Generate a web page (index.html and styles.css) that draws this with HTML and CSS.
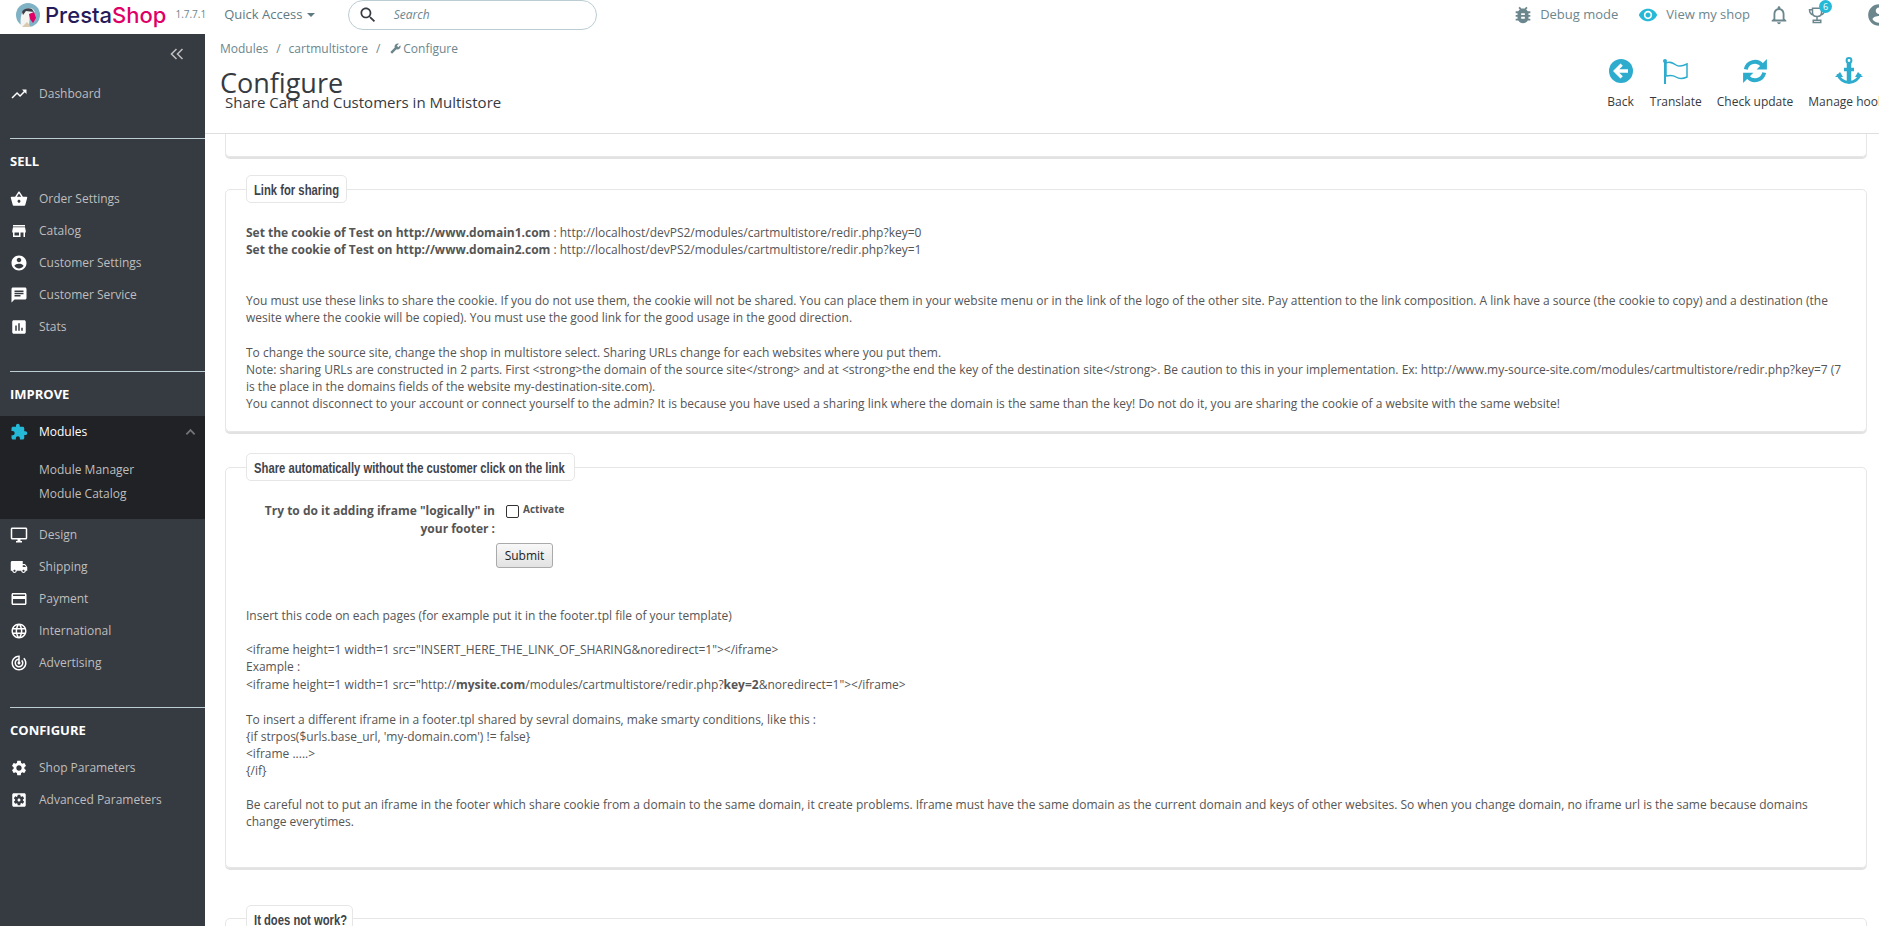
FILE: index.html
```html
<!DOCTYPE html>
<html lang="en">
<head>
    <meta charset="UTF-8">
    <title>Configure - PrestaShop</title>
    <link rel="stylesheet" href="styles.css">
</head>
<body>
    <!-- Top bar -->
    <div class="topbar">
        <svg class="logo-mark" viewBox="0 0 24 24" width="24" height="24">
            <circle cx="12" cy="12" r="12" fill="#7fb2c4"/>
            <path d="M5 23c-1-6 0-12 2-15 2-3 7-4 10-2l2 3-5 2-1 12z" fill="#f4f4f2"/>
            <path d="M6 9c1-3 6-5 10-3l2 3-8-1-3 4z" fill="#3a3f4a"/>
            <path d="M13 11l5-2 2 6-3 5-3-4z" fill="#df0067"/>
            <path d="M6 24l5-5 4 5z" fill="#d8c9b0"/>
        </svg>
        <span class="logo-text"><span class="logo-presta">Presta</span><span class="logo-shop">Shop</span></span>
        <span class="version">1.7.7.1</span>
        <a class="quick-access" href="#">Quick Access <span class="caret"></span></a>
        <div class="search-box">
            <svg viewBox="0 0 24 24" width="20" height="20"><path fill="#363a41" d="M15.5 14h-.79l-.28-.27C15.41 12.59 16 11.11 16 9.5 16 5.91 13.09 3 9.5 3S3 5.91 3 9.5 5.91 16 9.5 16c1.61 0 3.09-.59 4.23-1.57l.27.28v.79l5 4.99L20.49 19l-4.99-5zm-6 0C7.01 14 5 11.99 5 9.5S7.01 5 9.5 5 14 7.01 14 9.5 11.99 14 9.5 14z"/></svg>
            <span class="search-text">Search</span>
        </div>
        <div class="top-right">
            <svg class="top-icon" viewBox="0 0 24 24" width="22" height="22"><path fill="#6c868e" d="M20 8h-2.81c-.45-.78-1.07-1.45-1.82-1.96L17 4.41 15.59 3l-2.17 2.17C12.96 5.06 12.49 5 12 5c-.49 0-.96.06-1.41.17L8.41 3 7 4.41l1.62 1.63C7.88 6.55 7.26 7.22 6.81 8H4v2h2.09c-.05.33-.09.66-.09 1v1H4v2h2v1c0 .34.04.67.09 1H4v2h2.81c1.04 1.79 2.97 3 5.19 3s4.15-1.21 5.19-3H20v-2h-2.09c.05-.33.09-.66.09-1v-1h2v-2h-2v-1c0-.34-.04-.67-.09-1H20V8zm-6 8h-4v-2h4v2zm0-4h-4v-2h4v2z"/></svg>
            <span class="top-link debug-link">Debug mode</span>
            <svg class="top-icon" viewBox="0 0 24 24" width="20" height="20"><path fill="#25b9d7" d="M12 4.5C7 4.5 2.73 7.61 1 12c1.73 4.39 6 7.5 11 7.5s9.27-3.11 11-7.5c-1.73-4.39-6-7.5-11-7.5zM12 17c-2.76 0-5-2.24-5-5s2.24-5 5-5 5 2.24 5 5-2.24 5-5 5zm0-8c-1.66 0-3 1.34-3 3s1.34 3 3 3 3-1.34 3-3-1.34-3-3-3z"/></svg>
            <span class="top-link shop-link">View my shop</span>
            <svg class="bell" viewBox="0 0 24 24" width="22" height="22"><path fill="#6c868e" d="M12 22c1.1 0 2-.9 2-2h-4c0 1.1.9 2 2 2zm6-6v-5c0-3.07-1.63-5.64-4.5-6.32V4c0-.83-.67-1.5-1.5-1.5s-1.5.67-1.5 1.5v.68C7.64 5.36 6 7.92 6 11v5l-2 2v1h16v-1l-2-2zm-2 1H8v-6c0-2.48 1.51-4.5 4-4.5s4 2.02 4 4.5v6z"/></svg>
            <div class="trophy">
                <svg viewBox="0 0 24 24" width="18" height="20"><path fill="none" stroke="#6c868e" stroke-width="2" d="M6 3h12v6c0 3-2.5 5-6 5s-6-2-6-5zM6 5H2c0 4 1.5 6 5 7M18 5h4c0 4-1.5 6-5 7M12 14v4M7 22v-3h10v3z"/></svg>
                <span class="badge">6</span>
            </div>
            <svg class="avatar" viewBox="0 0 24 24" width="26" height="26"><path fill="#6c868e" d="M12 2C6.48 2 2 6.48 2 12s4.48 10 10 10 10-4.48 10-10S17.52 2 12 2zm0 3c1.66 0 3 1.34 3 3s-1.34 3-3 3-3-1.34-3-3 1.34-3 3-3zm0 14.2c-2.5 0-4.71-1.28-6-3.22.03-1.99 4-3.08 6-3.08 1.99 0 5.97 1.09 6 3.08-1.29 1.94-3.5 3.22-6 3.22z"/></svg>
        </div>
    </div>

    <div class="layout">
        <!-- Left menu -->
        <nav class="sidebar">
            <div class="collapse-row">
                <svg viewBox="0 0 14 12" width="14" height="12"><path fill="none" stroke="#bebebe" stroke-width="1.6" d="M6.5 1L1.5 6l5 5M12.5 1l-5 5 5 5"/></svg>
            </div>
            <a class="nav-item" href="#">
                <svg viewBox="0 0 24 24"><path d="M16 6l2.29 2.29-4.88 4.88-4-4L2 16.59 3.41 18l6-6 4 4 6.3-6.29L22 12V6z"/></svg>
                Dashboard
            </a>

            <div class="nav-section">
                <div class="nav-title">SELL</div>
                <a class="nav-item" href="#">
                    <svg viewBox="0 0 24 24"><path d="M17.21 9l-4.38-6.56c-.19-.28-.51-.42-.83-.42-.32 0-.64.14-.83.43L6.79 9H2c-.55 0-1 .45-1 1 0 .09.01.18.04.27l2.54 9.27c.23.84 1 1.46 1.92 1.46h13c.92 0 1.69-.62 1.93-1.46l2.54-9.27L23 10c0-.55-.45-1-1-1h-4.79zM9 9l3-4.4L15 9H9zm3 8c-1.1 0-2-.9-2-2s.9-2 2-2 2 .9 2 2-.9 2-2 2z"/></svg>
                    Order Settings
                </a>
                <a class="nav-item" href="#">
                    <svg viewBox="0 0 24 24"><path d="M20 4H4v2h16V4zm1 10v-2l-1-5H4l-1 5v2h1v6h10v-6h4v6h2v-6h1zm-9 4H6v-4h6v4z"/></svg>
                    Catalog
                </a>
                <a class="nav-item" href="#">
                    <svg viewBox="0 0 24 24"><path d="M12 2C6.48 2 2 6.48 2 12s4.48 10 10 10 10-4.48 10-10S17.52 2 12 2zm0 3c1.66 0 3 1.34 3 3s-1.34 3-3 3-3-1.34-3-3 1.34-3 3-3zm0 14.2c-2.5 0-4.71-1.28-6-3.22.03-1.99 4-3.08 6-3.08 1.99 0 5.97 1.09 6 3.08-1.29 1.94-3.5 3.22-6 3.22z"/></svg>
                    Customer Settings
                </a>
                <a class="nav-item" href="#">
                    <svg viewBox="0 0 24 24"><path d="M20 2H4c-1.1 0-1.99.9-1.99 2L2 22l4-4h14c1.1 0 2-.9 2-2V4c0-1.1-.9-2-2-2zM6 9h12v2H6V9zm8 5H6v-2h8v2zm4-6H6V6h12v2z"/></svg>
                    Customer Service
                </a>
                <a class="nav-item" href="#">
                    <svg viewBox="0 0 24 24"><path d="M19 3H5c-1.1 0-2 .9-2 2v14c0 1.1.9 2 2 2h14c1.1 0 2-.9 2-2V5c0-1.1-.9-2-2-2zM9 17H7v-7h2v7zm4 0h-2V7h2v10zm4 0h-2v-4h2v4z"/></svg>
                    Stats
                </a>
            </div>

            <div class="nav-section">
                <div class="nav-title">IMPROVE</div>
                <div class="nav-active">
                    <a class="nav-item nav-item-current" href="#">
                        <svg viewBox="0 0 24 24"><path d="M20.5 11H19V7c0-1.1-.9-2-2-2h-4V3.5C13 2.12 11.88 1 10.5 1S8 2.12 8 3.5V5H4c-1.1 0-1.99.9-1.99 2v3.8H3.5c1.49 0 2.7 1.21 2.7 2.7s-1.21 2.7-2.7 2.7H2V20c0 1.1.9 2 2 2h3.8v-1.5c0-1.49 1.21-2.7 2.7-2.7 1.49 0 2.7 1.21 2.7 2.7V22H17c1.1 0 2-.9 2-2v-4h1.5c1.38 0 2.5-1.12 2.5-2.5S21.88 11 20.5 11z"/></svg>
                        Modules
                        <svg class="chevron" viewBox="0 0 12 8"><path fill="none" stroke="#707478" stroke-width="2" d="M1.5 6.5L6 2l4.5 4.5"/></svg>
                    </a>
                    <a class="sub-item" href="#">Module Manager</a>
                    <a class="sub-item" href="#">Module Catalog</a>
                </div>
                <a class="nav-item" href="#">
                    <svg viewBox="0 0 24 24"><path d="M21 2H3c-1.1 0-2 .9-2 2v12c0 1.1.9 2 2 2h7v2H8v2h8v-2h-2v-2h7c1.1 0 2-.9 2-2V4c0-1.1-.9-2-2-2zm0 14H3V4h18v12z"/></svg>
                    Design
                </a>
                <a class="nav-item" href="#">
                    <svg viewBox="0 0 24 24"><path d="M20 8h-3V4H3c-1.1 0-2 .9-2 2v11h2c0 1.66 1.34 3 3 3s3-1.34 3-3h6c0 1.66 1.34 3 3 3s3-1.34 3-3h2v-5l-3-4zM6 18.5c-.83 0-1.5-.67-1.5-1.5s.67-1.5 1.5-1.5 1.5.67 1.5 1.5-.67 1.5-1.5 1.5zm13.5-9l1.96 2.5H17V9.5h2.5zm-1.5 9c-.83 0-1.5-.67-1.5-1.5s.67-1.5 1.5-1.5 1.5.67 1.5 1.5-.67 1.5-1.5 1.5z"/></svg>
                    Shipping
                </a>
                <a class="nav-item" href="#">
                    <svg viewBox="0 0 24 24"><path d="M20 4H4c-1.11 0-1.99.89-1.99 2L2 18c0 1.11.89 2 2 2h16c1.11 0 2-.89 2-2V6c0-1.11-.89-2-2-2zm0 14H4v-6h16v6zm0-10H4V6h16v2z"/></svg>
                    Payment
                </a>
                <a class="nav-item" href="#">
                    <svg viewBox="0 0 24 24"><path d="M11.99 2C6.47 2 2 6.48 2 12s4.47 10 9.99 10C17.52 22 22 17.52 22 12S17.52 2 11.99 2zm6.93 6h-2.95c-.32-1.25-.78-2.45-1.38-3.56 1.84.63 3.37 1.91 4.33 3.56zM12 4.04c.83 1.2 1.48 2.53 1.91 3.96h-3.82c.43-1.43 1.08-2.76 1.91-3.96zM4.26 14C4.1 13.36 4 12.69 4 12s.1-1.36.26-2h3.38c-.08.66-.14 1.32-.14 2 0 .68.06 1.34.14 2H4.26zm.82 2h2.95c.32 1.25.78 2.45 1.38 3.56-1.84-.63-3.37-1.9-4.33-3.56zm2.95-8H5.08c.96-1.66 2.49-2.93 4.33-3.56C8.81 5.55 8.35 6.75 8.03 8zM12 19.96c-.83-1.2-1.48-2.53-1.91-3.96h3.82c-.43 1.43-1.08 2.76-1.91 3.96zM14.34 14H9.66c-.09-.66-.16-1.32-.16-2 0-.68.07-1.35.16-2h4.68c.09.65.16 1.32.16 2 0 .68-.07 1.34-.16 2zm.25 5.56c.6-1.11 1.06-2.31 1.38-3.56h2.95c-.96 1.65-2.49 2.93-4.33 3.56zM16.36 14c.08-.66.14-1.32.14-2 0-.68-.06-1.34-.14-2h3.38c.16.64.26 1.31.26 2s-.1 1.36-.26 2h-3.38z"/></svg>
                    International
                </a>
                <a class="nav-item" href="#">
                    <svg viewBox="0 0 24 24"><path d="M19.07 4.93l-1.41 1.41C19.1 7.79 20 9.79 20 12c0 4.42-3.58 8-8 8s-8-3.58-8-8c0-4.08 3.05-7.44 7-7.93v2.02C8.16 6.57 6 9.03 6 12c0 3.31 2.69 6 6 6s6-2.69 6-6c0-1.66-.67-3.16-1.76-4.24l-1.41 1.41C15.55 9.9 16 10.9 16 12c0 2.21-1.79 4-4 4s-4-1.79-4-4c0-1.86 1.28-3.41 3-3.86v2.14c-.6.35-1 .98-1 1.72 0 1.1.9 2 2 2s2-.9 2-2c0-.74-.4-1.38-1-1.72V2h-1C6.48 2 2 6.48 2 12s4.48 10 10 10 10-4.48 10-10c0-2.76-1.12-5.26-2.93-7.07z"/></svg>
                    Advertising
                </a>
            </div>

            <div class="nav-section">
                <div class="nav-title">CONFIGURE</div>
                <a class="nav-item" href="#">
                    <svg viewBox="0 0 24 24"><path d="M19.14 12.94c.04-.3.06-.61.06-.94 0-.32-.02-.64-.07-.94l2.03-1.58c.18-.14.23-.41.12-.61l-1.92-3.32c-.12-.22-.37-.29-.59-.22l-2.39.96c-.5-.38-1.03-.7-1.62-.94l-.36-2.54c-.04-.24-.24-.41-.48-.41h-3.84c-.24 0-.43.17-.47.41l-.36 2.54c-.59.24-1.13.57-1.62.94l-2.39-.96c-.22-.08-.47 0-.59.22L2.74 8.87c-.12.21-.08.47.12.61l2.03 1.58c-.05.3-.09.63-.09.94s.02.64.07.94l-2.03 1.58c-.18.14-.23.41-.12.61l1.92 3.32c.12.22.37.29.59.22l2.39-.96c.5.38 1.03.7 1.62.94l.36 2.54c.05.24.24.41.48.41h3.84c.24 0 .44-.17.47-.41l.36-2.54c.59-.24 1.13-.56 1.62-.94l2.39.96c.22.08.47 0 .59-.22l1.92-3.32c.12-.22.07-.47-.12-.61l-2.01-1.58zM12 15.6c-1.98 0-3.6-1.62-3.6-3.6s1.62-3.6 3.6-3.6 3.6 1.62 3.6 3.6-1.62 3.6-3.6 3.6z"/></svg>
                    Shop Parameters
                </a>
                <a class="nav-item" href="#">
                    <svg viewBox="0 0 24 24"><path d="M12 10c-1.1 0-2 .9-2 2s.9 2 2 2 2-.9 2-2-.9-2-2-2zm7-7H5c-1.11 0-2 .9-2 2v14c0 1.1.89 2 2 2h14c1.11 0 2-.9 2-2V5c0-1.1-.89-2-2-2zm-1.75 9c0 .23-.02.46-.05.68l1.48 1.16c.13.11.17.3.08.45l-1.4 2.42c-.09.15-.27.21-.43.15l-1.74-.7c-.36.28-.76.51-1.18.69l-.26 1.85c-.03.17-.18.3-.35.3h-2.8c-.17 0-.32-.13-.35-.29l-.26-1.85c-.43-.18-.82-.41-1.18-.69l-1.74.7c-.16.06-.34 0-.43-.15l-1.4-2.42c-.09-.15-.05-.34.08-.45l1.48-1.16c-.03-.23-.05-.46-.05-.69 0-.23.02-.46.05-.68l-1.48-1.16c-.13-.11-.17-.3-.08-.45l1.4-2.42c.09-.15.27-.21.43-.15l1.74.7c.36-.28.76-.51 1.18-.69l.26-1.85c.03-.17.18-.3.35-.3h2.8c.17 0 .32.13.35.29l.26 1.85c.43.18.82.41 1.18.69l1.74-.7c.16-.06.34 0 .43.15l1.4 2.42c.09.15.05.34-.08.45l-1.48 1.16c.03.23.05.46.05.69z"/></svg>
                    Advanced Parameters
                </a>
            </div>
        </nav>

        <main class="main">
            <!-- Page header -->
            <header class="page-head">
                <div class="head-left">
                    <div class="breadcrumb">
                        <a href="#">Modules</a><span class="crumb-sep">/</span><a href="#">cartmultistore</a><span class="crumb-sep">/</span>
                        <svg class="wrench" viewBox="0 0 24 24" width="11" height="11"><path fill="#6c868e" d="M22.7 19l-9.1-9.1c.9-2.3.4-5-1.5-6.9-2-2-5-2.4-7.4-1.3L9 6 6 9 1.6 4.7C.4 7.1.9 10.1 2.9 12.1c1.9 1.9 4.6 2.4 6.9 1.5l9.1 9.1c.4.4 1 .4 1.4 0l2.3-2.3c.5-.4.5-1.1.1-1.4z" transform="matrix(-1 0 0 1 24 0)"/></svg>
                        <span>Configure</span>
                    </div>
                    <h1 class="page-title">Configure</h1>
                    <h2 class="page-sub">Share Cart and Customers in Multistore</h2>
                </div>
                <div class="toolbar">
                    <a class="tool tool-back" href="#">
                        <svg viewBox="0 0 24 24" width="24" height="24"><circle cx="12" cy="12" r="12" fill="#2eacce"/><path fill="#fff" d="M11.5 4.5l2.3 2.3-3.5 3.4H19v3.600h-8.700l3.500 3.400-2.300 2.300L4 12z"/></svg>
                        <span>Back</span>
                    </a>
                    <a class="tool" href="#">
                        <svg viewBox="0 0 28 26" width="28" height="26"><path fill="none" stroke="#2eacce" stroke-width="2" d="M3 3v23"/><circle cx="3" cy="3" r="2" fill="#2eacce"/><path fill="none" stroke="#2eacce" stroke-width="1.5" d="M4 5c4-2 7 0 10 2s7 1 11-1v13c-4 2-8 2-11 0s-6-2-10-1z"/></svg>
                        <span>Translate</span>
                    </a>
                    <a class="tool" href="#">
                        <svg viewBox="0 0 24 24" width="26" height="26"><path fill="none" stroke="#2eacce" stroke-width="3.6" d="M3.5 10.500A8.700 8.700 0 0 1 18.500 6.500M20.500 13.500A8.700 8.700 0 0 1 5.500 17.500"/><path fill="#2eacce" d="M23 1v9.500h-9.500zM1 23v-9.500h9.500z"/></svg>
                        <span>Check update</span>
                    </a>
                    <a class="tool" href="#">
                        <svg viewBox="0 0 28 28" width="28" height="28"><g fill="none" stroke="#2eacce"><circle cx="14" cy="3.5" r="2.4" stroke-width="2"/><path stroke-width="4.5" d="M14 6v20"/><path stroke-width="3.5" d="M9 12.500h10"/><path stroke-width="3" d="M3 17c1 5 6 8.500 11 8.500s10-3.500 11-8.500"/></g><path fill="#2eacce" d="M0 20l5-5 3 5zM28 20l-5-5-3 5z"/></svg>
                        <span>Manage hooks</span>
                    </a>
                </div>
            </header>

            <div class="content">
                <div class="card-tail"></div>

                <fieldset class="card">
                    <legend class="legend-link"><span>Link for sharing</span></legend>
                    <p class="share-links">
                        <b>Set the cookie of Test on http://www.domain1.com</b> : http://localhost/devPS2/modules/cartmultistore/redir.php?key=0<br>
                        <b>Set the cookie of Test on http://www.domain2.com</b> : http://localhost/devPS2/modules/cartmultistore/redir.php?key=1
                    </p>
                    <p class="text-block">You must use these links to share the cookie. If you do not use them, the cookie will not be shared. You can place them in your website menu or in the link of the logo of the other site. Pay attention to the link composition. A link have a source (the cookie to copy) and a destination (the wesite where the cookie will be copied). You must use the good link for the good usage in the good direction.</p>
                    <p class="text-block">To change the source site, change the shop in multistore select. Sharing URLs change for each websites where you put them.<br>
                    Note: sharing URLs are constructed in 2 parts. First &lt;strong&gt;the domain of the source site&lt;/strong&gt; and at &lt;strong&gt;the end the key of the destination site&lt;/strong&gt;. Be caution to this in your implementation. Ex: http://www.my-source-site.com/modules/cartmultistore/redir.php?key=7 (7 is the place in the domains fields of the website my-destination-site.com).<br>
                    You cannot disconnect to your account or connect yourself to the admin? It is because you have used a sharing link where the domain is the same than the key! Do not do it, you are sharing the cookie of a website with the same website!</p>
                </fieldset>

                <fieldset class="card card-auto">
                    <legend class="legend-auto"><span>Share automatically without the customer click on the link</span></legend>
                    <form class="auto-form">
                        <div class="form-row">
                            <label class="form-label" for="activate">Try to do it adding iframe "logically" in your footer :</label>
                            <div class="form-check">
                                <input type="checkbox" id="activate">
                                <span class="check-text">Activate</span>
                            </div>
                        </div>
                        <button type="button" class="submit-btn">Submit</button>
                    </form>
                    <p class="insert-note">Insert this code on each pages (for example put it in the footer.tpl file of your template)</p>
                    <p class="text-block">&lt;iframe height=1 width=1 src="INSERT_HERE_THE_LINK_OF_SHARING&amp;noredirect=1"&gt;&lt;/iframe&gt;<br>
                    Example :<br>
                    &lt;iframe height=1 width=1 src="http://<b>mysite.com</b>/modules/cartmultistore/redir.php?<b>key=2</b>&amp;noredirect=1"&gt;&lt;/iframe&gt;</p>
                    <p class="text-block smarty-block">To insert a different iframe in a footer.tpl shared by sevral domains, make smarty conditions, like this :<br>
                    {if strpos($urls.base_url, 'my-domain.com') != false}<br>
                    &lt;iframe .....&gt;<br>
                    {/if}</p>
                    <p class="text-block">Be careful not to put an iframe in the footer which share cookie from a domain to the same domain, it create problems. Iframe must have the same domain as the current domain and keys of other websites. So when you change domain, no iframe url is the same because domains change everytimes.</p>
                </fieldset>

                <fieldset class="card">
                    <legend class="legend-help"><span>It does not work?</span></legend>
                </fieldset>
            </div>
        </main>
    </div>
</body>
</html>
```

FILE: styles.css
```css
* {
    box-sizing: border-box;
}
html, body {
    height: 100%;
}
body {
    margin: 0;
    overflow: hidden;
    display: flex;
    flex-direction: column;
    font-family: "Open Sans", sans-serif;
    font-size: 12px;
    line-height: 17.14px;
    color: #555;
    background-color: #fff;
}
a {
    color: inherit;
    text-decoration: none;
}

/* Top bar */
.topbar {
    flex: none;
    height: 34px;
    padding-bottom: 5px;
    display: flex;
    align-items: center;
    overflow: hidden;
    background-color: #fff;
}
.logo-mark {
    flex: none;
    margin-left: 16px;
}
.logo-text {
    margin-left: 5px;
    font-family: "Inter", sans-serif;
    font-size: 22px;
    font-weight: 500;
    line-height: 30px;
}
.logo-presta {
    color: #251b5b;
}
.logo-shop {
    color: #df0067;
}
.version {
    margin-left: 9px;
    font-size: 10px;
    color: #6c868e;
}
.quick-access {
    margin-left: 18px;
    font-size: 13px;
    color: #5f7a83;
}
.caret {
    display: inline-block;
    margin-left: 1px;
    vertical-align: middle;
    border-left: 4px solid transparent;
    border-right: 4px solid transparent;
    border-top: 4px solid #5f7a83;
}
.search-box {
    flex: none;
    width: 249px;
    height: 30px;
    margin-left: 33px;
    padding-left: 9px;
    display: flex;
    align-items: center;
    gap: 16px;
    border: 1px solid #bbcdd2;
    border-radius: 15px;
}
.search-text {
    font-size: 12px;
    font-style: italic;
    color: #6c868e;
}
.top-right {
    flex: none;
    margin-left: auto;
    margin-right: -13px;
    display: flex;
    align-items: center;
}
.top-link {
    font-size: 13px;
    color: #6c868e;
}
.debug-link {
    margin: 0 20px 0 6px;
}
.shop-link {
    margin: 0 18px 0 8px;
}
.trophy {
    position: relative;
    height: 20px;
    margin-left: 18px;
}
.badge {
    position: absolute;
    top: -5px;
    left: 11px;
    width: 13px;
    height: 13px;
    border-radius: 50%;
    background-color: #25b9d7;
    color: #fff;
    font-size: 9px;
    line-height: 13px;
    text-align: center;
}
.avatar {
    margin-left: 40px;
}

/* Layout */
.layout {
    flex: 1;
    min-height: 0;
    display: flex;
}

/* Left menu */
.sidebar {
    flex: none;
    width: 205px;
    background-color: #363a41;
    color: #bebebe;
    font-size: 12px;
}
.collapse-row {
    height: 44px;
    padding: 14px 21px 0 0;
    display: flex;
    justify-content: flex-end;
}
.nav-item {
    height: 32px;
    padding-left: 10px;
    display: flex;
    align-items: center;
    gap: 11px;
}
.nav-item svg {
    flex: none;
    width: 18px;
    height: 18px;
    fill: #fff;
}
.nav-section {
    margin: 28px 0 0 10px;
    padding-top: 13px;
    border-top: 1px solid #bbcdd2;
}
.nav-section .nav-item,
.nav-active {
    margin-left: -10px;
}
.nav-active .nav-item {
    margin-left: 0;
}
.nav-title {
    height: 31px;
    font-size: 13px;
    font-weight: 700;
    color: #fff;
    line-height: 18px;
}
.nav-active {
    padding-bottom: 13px;
    background-color: #202226;
}
.nav-item-current {
    color: #fff;
}
.nav-item-current svg {
    fill: #25b9d7;
}
.nav-item-current .chevron {
    width: 11px;
    height: 8px;
    margin-left: auto;
    margin-right: 9px;
}
.sub-item {
    display: block;
    height: 24px;
    padding-left: 39px;
    line-height: 24px;
}
.nav-item-current + .sub-item {
    margin-top: 10px;
}

/* Page header */
.main {
    flex: 1;
    min-width: 0;
    display: flex;
    flex-direction: column;
}
.page-head {
    flex: none;
    height: 100px;
    padding-left: 15px;
    display: flex;
    justify-content: space-between;
    overflow: hidden;
    border-bottom: 1px solid #dfdfdf;
}
.breadcrumb {
    margin-top: 6px;
    display: flex;
    align-items: center;
    color: #6c868e;
}
.crumb-sep {
    margin: 0 8px;
}
.wrench {
    margin: 0 2px 0 2px;
}
.page-title {
    margin: 11px 0 0;
    font-size: 27px;
    font-weight: 400;
    line-height: 30px;
    color: #363a41;
}
.page-sub {
    margin: -6px 0 0 5px;
    font-size: 15px;
    font-weight: 400;
    line-height: 20px;
    color: #363a41;
}
.toolbar {
    flex: none;
    margin-right: -11px;
    display: flex;
    gap: 15px;
}
.tool {
    height: 99px;
    padding-top: 23px;
    display: flex;
    flex-direction: column;
    align-items: center;
    color: #363a41;
}
.tool-back {
    margin-right: 1px;
}
.tool svg {
    height: 28px;
    flex: none;
}
.tool span {
    margin-top: 8px;
}

/* Cards */
.content {
    flex: 1;
    min-height: 0;
    overflow: hidden;
    padding: 0 12px 0 20px;
}
.card-tail {
    height: 23px;
    margin-bottom: 18px;
    border: 1px solid #e6e6e6;
    border-top: 0;
    border-radius: 0 0 5px 5px;
    box-shadow: 0 2px 0 #e2e2e2;
}
.card {
    min-width: 0;
    margin: 0 0 21px;
    padding: 21px 20px 19px;
    border: 1px solid #e6e6e6;
    border-radius: 5px;
    box-shadow: 0 2px 0 #e2e2e2;
}
.card-auto {
    margin-bottom: 37px;
    padding-top: 21px;
    padding-bottom: 36px;
}
.card legend {
    padding: 0 7px;
    height: 28px;
    border: 1px solid #e6e6e6;
    border-radius: 5px;
    background-color: #fff;
    font-family: "Liberation Sans", sans-serif;
    font-size: 15px;
    font-weight: 700;
    line-height: 27px;
    color: #3f444c;
}
/* no condensed font here, so the legend text gets squeezed */
.card legend span {
    display: block;
    white-space: nowrap;
    transform: scaleX(0.75);
    transform-origin: left center;
}
.legend-link {
    width: 101px;
}
.legend-auto {
    width: 329px;
}
.legend-help {
    width: 107px;
}
.card p {
    margin: 0;
}
.share-links {
    padding-bottom: 34px;
}
.text-block + .text-block {
    margin-top: 17px;
}
.text-block + .smarty-block {
    margin-top: 18px;
}
.auto-form {
    margin-bottom: 39px;
}
.form-row {
    display: flex;
}
.form-label {
    flex: none;
    width: 249px;
    text-align: right;
    font-weight: 700;
    font-size: 12px;
    line-height: 18px;
}
.form-check {
    margin-left: 11px;
    display: flex;
    align-items: flex-start;
}
.form-check input {
    appearance: none;
    width: 13px;
    height: 13px;
    margin: 3px 4px 0 0;
    border: 1px solid #333;
    border-radius: 2px;
    background-color: #fff;
}
.check-text {
    font-size: 10px;
    font-weight: 700;
    line-height: 14px;
}
.submit-btn {
    display: block;
    width: 57px;
    height: 25px;
    margin: 5px 0 0 250px;
    padding: 0;
    border: 1px solid #aaa;
    border-radius: 3px;
    background: linear-gradient(#f8f8f8, #e2e2e2);
    font-family: "Open Sans", sans-serif;
    font-size: 12px;
    color: #222;
}
.card .insert-note {
    margin-bottom: 17px;
}
```
